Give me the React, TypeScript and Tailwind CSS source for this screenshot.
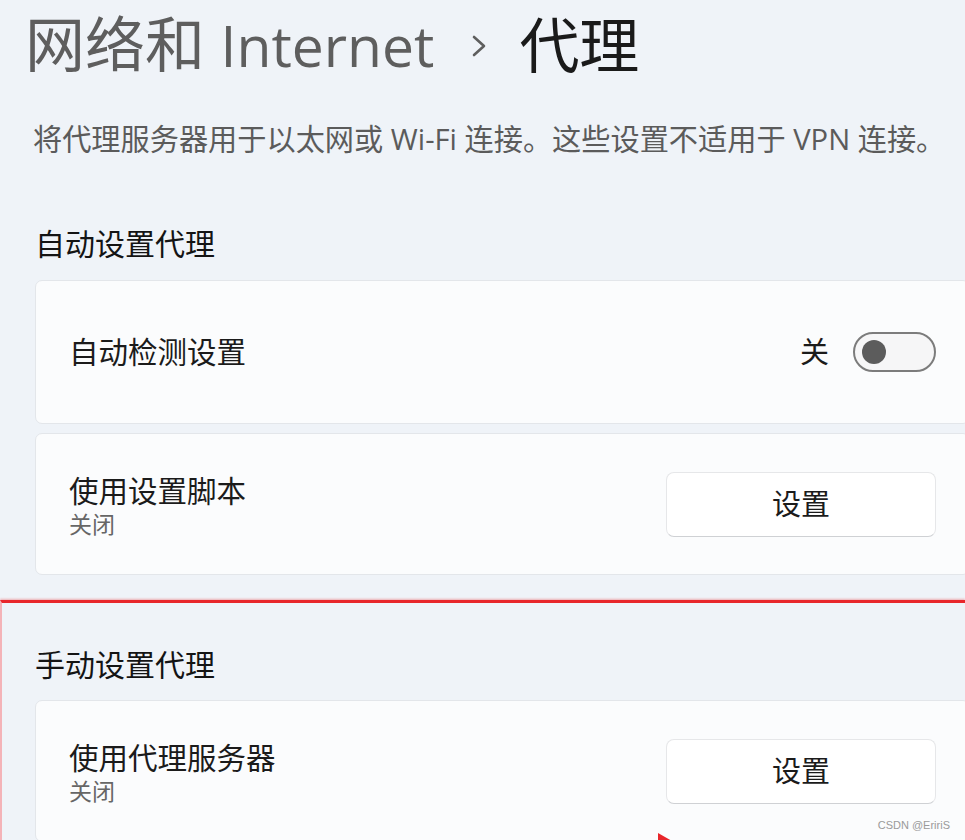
import React from 'react';

const cjk = "font-['Open_Sans','Noto_Sans_CJK_SC',sans-serif]";

const Toggle: React.FC = () => (
  <div className="w-[83px] h-[40px] rounded-full border-2 border-[#7c7c7c] bg-[#f6f6f7] flex items-center pl-[7px]">
    <div className="w-[24px] h-[24px] rounded-full bg-[#5c5c5c]" />
  </div>
);

const SetButton: React.FC = () => (
  <button
    type="button"
    className="w-[270px] h-[65px] bg-white rounded-[8px] border border-[#e6e7e9] border-b-[#cfd1d4] text-[29px] text-[#1b1b1b] flex items-center justify-center"
  >
    设置
  </button>
);

const ButtonRow: React.FC<{ title: string; sub: string }> = ({ title, sub }) => (
  <div className="w-[935px] h-[142px] bg-[#fbfcfd] rounded-[7px] border border-[#e3e6ea] pl-[33px] pr-[33px] flex items-center justify-between">
    <div className="flex flex-col pt-[4px]">
      <span className="text-[29.5px] leading-[36px] text-[#1b1b1b]">{title}</span>
      <span className="text-[23px] leading-[30px] text-[#666]">{sub}</span>
    </div>
    <SetButton />
  </div>
);

const App: React.FC = () => {
  return (
    <div className={`relative w-[965px] h-[840px] overflow-hidden bg-[#eff3f8] ${cjk}`}>
      {/* Breadcrumb title */}
      <div className="pl-[25px] pt-[15px] flex items-center h-[74px]">
        <span className="text-[60px] leading-[58px] text-[#5e5e5e]">
          网络和 <span className="text-[57px]">Internet</span>
        </span>
        <svg width="20" height="28" viewBox="0 0 20 28" className="ml-[35px] mr-[30px] mt-[2px]">
          <path d="M5 5 L15 14 L5 23" fill="none" stroke="#5e5e5e" strokeWidth="2.6" strokeLinecap="round" strokeLinejoin="round" />
        </svg>
        <span className="text-[60px] leading-[58px] text-[#1a1a1a]">代理</span>
      </div>

      {/* Description */}
      <p className="mt-[47px] pl-[33px] text-[29.2px] leading-[36px] text-[#5b5b5b] whitespace-nowrap">
        将代理服务器用于以太网或 Wi-Fi 连接。这些设置不适用于 VPN 连接。
      </p>

      {/* Automatic */}
      <div className="pl-[35px]">
        <h2 className="mt-[69px] text-[30px] leading-[36px] text-[#141414]">自动设置代理</h2>
        <div className="mt-[18px] flex flex-col gap-[9px]">
          <div className="w-[935px] h-[144px] bg-[#fbfcfd] rounded-[7px] border border-[#e3e6ea] pl-[33px] pr-[33px] flex items-center justify-between">
            <span className="text-[29.5px] leading-[36px] text-[#1b1b1b]">自动检测设置</span>
            <div className="flex items-center gap-[24px]">
              <span className="text-[29px] leading-[36px] text-[#1b1b1b]">关</span>
              <Toggle />
            </div>
          </div>
          <ButtonRow title="使用设置脚本" sub="关闭" />
        </div>
      </div>

      {/* Manual - highlighted with red box */}
      <div className="mt-[25px] border-t-[3px] border-t-[#e8262b] border-l-2 border-l-[#f4b3b8] pl-[33px] shadow-[0_-1px_2px_rgba(232,38,43,0.35)]">
        <h2 className="mt-[44px] text-[30px] leading-[36px] text-[#141414]">手动设置代理</h2>
        <div className="mt-[17px]">
          <ButtonRow title="使用代理服务器" sub="关闭" />
        </div>
      </div>

      {/* Arrow tip */}
      <svg width="14" height="8" viewBox="0 0 14 8" className="absolute left-[658px] top-[833px]">
        <path d="M0 0 L14 8 L0 8 Z" fill="#e8262b" />
      </svg>

      <span className="absolute right-[15px] bottom-[7px] text-[11px] text-[#9a9a9a] font-['Liberation_Sans',sans-serif]">
        CSDN @EririS
      </span>
    </div>
  );
};

export default App;
